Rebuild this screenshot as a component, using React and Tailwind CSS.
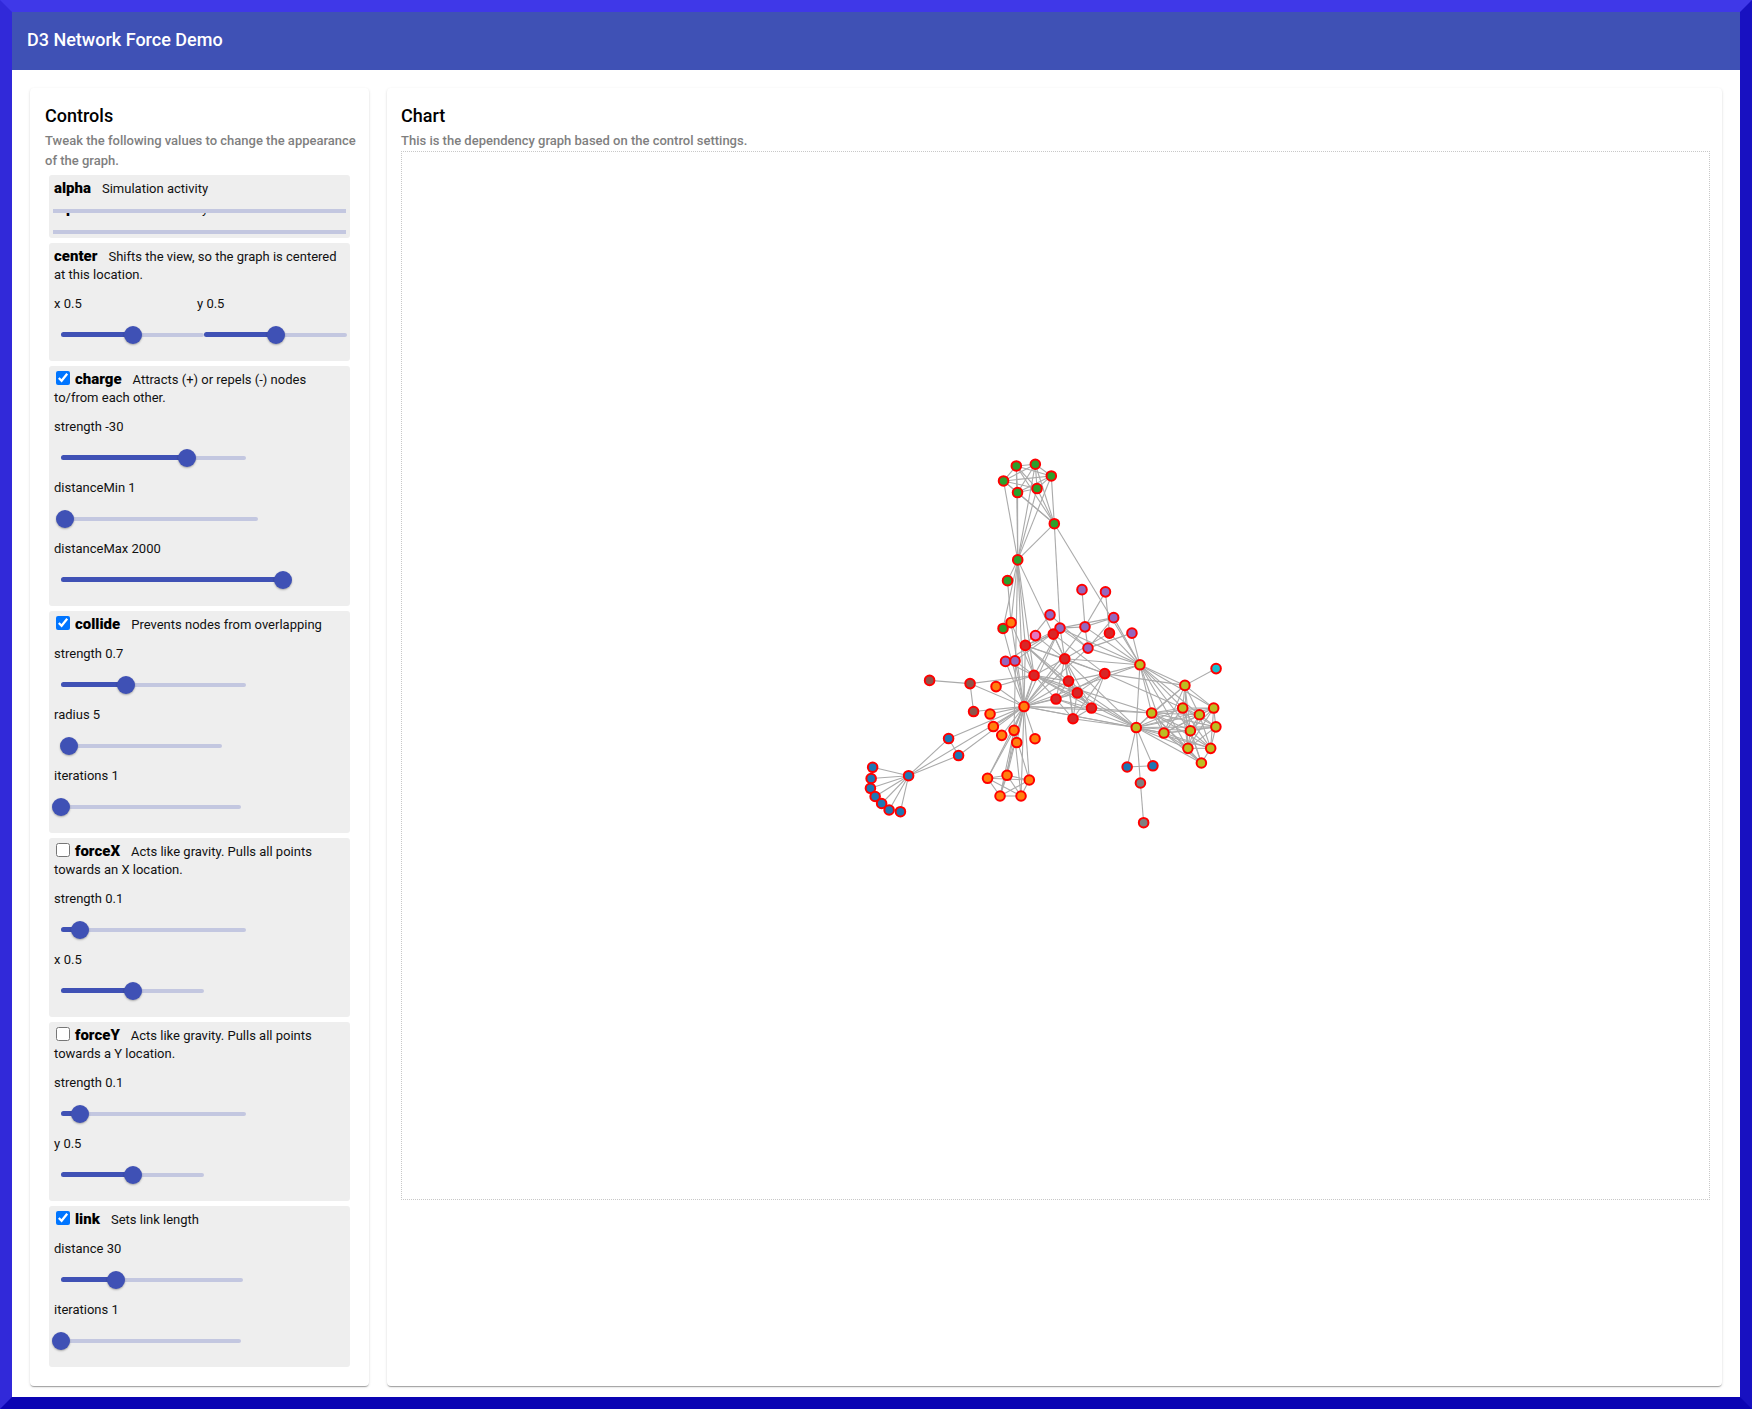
import { useState } from "react";

const PALETTE = {
  blue: "#1f77b4",
  orange: "#ff7f0e",
  green: "#2ca02c",
  red: "#d62728",
  purple: "#9467bd",
  brown: "#8c564b",
  pink: "#e377c2",
  gray: "#7f7f7f",
  olive: "#bcbd22",
  cyan: "#17becf",
};

// id, colour, x, y
const NODES = [
  [0, "blue", 908.5, 775.7],
  [1, "blue", 872.5, 767.3],
  [2, "blue", 948.5, 738.5],
  [3, "blue", 958.5, 755.5],
  [4, "blue", 871, 778.5],
  [5, "blue", 870.3, 788.3],
  [6, "blue", 875, 796.5],
  [7, "blue", 881.5, 803.5],
  [8, "blue", 889, 810],
  [9, "blue", 900.3, 811.7],
  [10, "orange", 990, 714],
  [11, "orange", 1024, 706.5],
  [12, "green", 1003, 628.3],
  [13, "orange", 993.3, 726.5],
  [14, "orange", 1001.7, 735.3],
  [15, "orange", 1016.7, 742.5],
  [16, "green", 1054.3, 523.5],
  [17, "green", 1016.3, 465.7],
  [18, "green", 1035.3, 464],
  [19, "green", 1051.3, 475.7],
  [20, "green", 1003.5, 480.7],
  [21, "green", 1017.5, 492.3],
  [22, "green", 1037, 488.3],
  [23, "green", 1017.7, 559.7],
  [24, "red", 1025.3, 645.3],
  [25, "red", 1064.8, 658.7],
  [26, "purple", 1060, 628],
  [27, "red", 1034, 675.3],
  [28, "brown", 970, 683.5],
  [29, "orange", 1014, 730.3],
  [30, "green", 1007.5, 580.5],
  [31, "orange", 1011, 622.5],
  [32, "orange", 1035, 738.7],
  [33, "orange", 996, 686.5],
  [34, "orange", 987.5, 778.3],
  [35, "orange", 1007, 775.3],
  [36, "orange", 1029.3, 780],
  [37, "orange", 1000, 796],
  [38, "orange", 1021, 796],
  [39, "red", 1109.5, 633],
  [40, "pink", 1035.5, 635.5],
  [41, "red", 1104.8, 673.5],
  [42, "red", 1053.3, 634],
  [43, "purple", 1005.5, 661.3],
  [44, "brown", 973.5, 711.5],
  [45, "brown", 929.5, 680.3],
  [46, "gray", 1143.7, 822.7],
  [47, "gray", 1140.5, 783],
  [48, "olive", 1136.3, 727.5],
  [49, "purple", 1088, 648],
  [50, "purple", 1050, 614.7],
  [51, "purple", 1085, 626.7],
  [52, "purple", 1105.5, 591.7],
  [53, "purple", 1082, 589.5],
  [54, "purple", 1113.7, 617.5],
  [55, "olive", 1140, 664.7],
  [56, "purple", 1132, 633],
  [57, "olive", 1185, 685.3],
  [58, "olive", 1151.7, 713],
  [59, "olive", 1199.5, 714.7],
  [60, "olive", 1216, 726.8],
  [61, "olive", 1213.8, 708],
  [62, "olive", 1182.8, 708],
  [63, "olive", 1190.5, 730.7],
  [64, "olive", 1164, 733],
  [65, "olive", 1188, 748.3],
  [66, "olive", 1210.8, 748.3],
  [67, "cyan", 1216.2, 668.5],
  [68, "red", 1068.5, 681],
  [69, "red", 1077.3, 692.8],
  [70, "red", 1091.5, 708],
  [71, "red", 1056, 699],
  [72, "purple", 1015, 660.8],
  [73, "blue", 1127.2, 767],
  [74, "blue", 1153, 765.8],
  [75, "red", 1073, 718.7],
  [76, "olive", 1201.5, 763],
];

// source id -> target ids
const LINKS = {
  1: [0], 2: [0], 3: [0, 2], 4: [0], 5: [0], 6: [0], 7: [0], 8: [0], 9: [0],
  11: [10, 3, 2, 0],
  12: [11], 13: [11], 14: [11], 15: [11],
  17: [16], 18: [16, 17], 19: [16, 17, 18], 20: [16, 17, 18, 19],
  21: [16, 17, 18, 19, 20], 22: [16, 17, 18, 19, 20, 21],
  23: [16, 17, 18, 19, 20, 21, 22, 12, 11],
  24: [23, 11], 25: [24, 23, 11], 26: [24, 11, 16, 25],
  27: [11, 23, 25, 24, 26], 28: [11, 27], 29: [23, 27, 11], 30: [23],
  31: [30, 11, 23, 27], 32: [11], 33: [11, 27], 34: [11, 29],
  35: [11, 34, 29], 36: [34, 35, 11, 29], 37: [34, 35, 36, 11, 29],
  38: [34, 35, 36, 37, 11, 29], 39: [25], 40: [25], 41: [24, 25],
  42: [41, 25, 24], 43: [11, 26, 27], 44: [28, 11], 45: [28], 47: [46],
  48: [47, 25, 27, 11], 49: [26, 11], 50: [49, 24], 51: [49, 26, 11],
  52: [51, 39], 53: [51], 54: [51, 49, 26],
  55: [51, 49, 39, 54, 26, 11, 16, 25, 41, 48], 56: [49, 55],
  57: [55, 41, 48], 58: [55, 48, 27, 57, 11], 59: [58, 55, 48, 57],
  60: [48, 58, 59], 61: [48, 58, 60, 59, 57, 55],
  62: [55, 58, 59, 48, 57, 41, 61, 60],
  63: [59, 48, 62, 57, 58, 61, 60, 55],
  64: [55, 62, 48, 63, 58, 61, 60, 59, 57, 11],
  65: [63, 64, 48, 62, 58, 61, 60, 59, 57, 55],
  66: [64, 58, 59, 62, 65, 48, 63, 61, 60], 67: [57],
  68: [25, 11, 24, 27, 48, 41], 69: [25, 68, 11, 24, 27, 48, 41],
  70: [25, 69, 68, 11, 24, 27, 41, 58],
  71: [27, 69, 68, 70, 11, 48, 41, 25], 72: [26, 27, 11], 73: [48],
  74: [48, 73], 75: [69, 68, 25, 48, 41, 70, 71],
  76: [64, 65, 66, 63, 62, 48, 58],
};

const BY_ID = new Map(NODES.map((n) => [n[0], n]));

function Graph() {
  return (
    <svg
      viewBox="401.5 151.5 1308 1048"
      className="block h-auto w-full border border-dotted border-[#c8c8c8]"
      role="img"
      aria-label="Force-directed dependency graph"
    >
      <g stroke="#aaaaaa" strokeWidth="1.1">
        {Object.entries(LINKS).flatMap(([s, targets]) =>
          targets.map((t) => {
            const a = BY_ID.get(Number(s));
            const b = BY_ID.get(t);
            return <line key={`${s}-${t}`} x1={a[2]} y1={a[3]} x2={b[2]} y2={b[3]} />;
          })
        )}
      </g>
      <g stroke="#ff0000" strokeWidth="2">
        {NODES.map(([id, color, x, y]) => (
          <circle key={id} cx={x} cy={y} r="4.8" fill={PALETTE[color]} />
        ))}
      </g>
    </svg>
  );
}

function Slider({ id, label, min, max, step, initial, width }) {
  const [value, setValue] = useState(initial);
  const pct = ((value - min) / (max - min)) * 100;
  return (
    <div>
      <label htmlFor={id} className="block pl-px leading-5">
        {label} {value}
      </label>
      <div className={"ml-2 grid h-[41px] items-center " + width}>
        <span className="col-start-1 row-start-1 h-1 rounded-full bg-[#c3c7e0]" />
        <span
          className="col-start-1 row-start-1 h-[5px] rounded-full bg-[#3f51b5]"
          style={{ width: `${pct}%` }}
        />
        <input
          id={id}
          type="range"
          min={min}
          max={max}
          step={step}
          value={value}
          onChange={(e) => setValue(Number(e.target.value))}
          className="z-10 col-start-1 row-start-1 -mx-[9px] h-[18px] cursor-pointer appearance-none bg-transparent [&::-webkit-slider-thumb]:size-[18px] [&::-webkit-slider-thumb]:appearance-none [&::-webkit-slider-thumb]:rounded-full [&::-webkit-slider-thumb]:bg-[#3f51b5] [&::-webkit-slider-thumb]:shadow-[0_1px_2px_rgba(0,0,0,0.3)]"
        />
      </div>
    </div>
  );
}

function Force({ name, description, checked, children }) {
  const id = `force-${name}`;
  const title = "mr-[11px] text-[15px] font-black text-black";
  return (
    <section className="rounded-[3px] bg-[#eeeeee] px-1 pt-1 pb-[6px]">
      <div className="pl-px leading-[18px]">
        {checked === undefined ? (
          <b className={title}>{name}</b>
        ) : (
          <>
            <input
              id={id}
              type="checkbox"
              defaultChecked={checked}
              className="mr-[5px] ml-[2px] size-[14px] align-[-1px]"
            />
            <label htmlFor={id} className={title}>
              {name}
            </label>
          </>
        )}
        {description}
      </div>
      <div className="mt-[10px]">{children}</div>
    </section>
  );
}

function AlphaTitle() {
  return (
    <>
      <b className="mr-[11px] text-[15px] font-black text-black">alpha</b>Simulation activity
    </>
  );
}

function Alpha() {
  return (
    <section className="rounded-[3px] bg-[#eeeeee] px-1 py-1">
      <div className="pl-px leading-[18px]">
        <AlphaTitle />
      </div>
      <div className="mt-[11px] h-1 bg-[#c3c7e0]" role="progressbar" aria-label="alpha" />
      <div className="flex h-1 items-end overflow-hidden pl-px leading-[16px]" aria-hidden="true">
        <div>
          <AlphaTitle />
        </div>
      </div>
      <div className="mt-[13px] h-1 bg-[#c3c7e0]" role="progressbar" aria-label="alpha target" />
    </section>
  );
}

function Panel({ title, subtitle, className, children }) {
  return (
    <section
      className={
        "rounded-[4px] bg-white pt-[13px] pb-[19px] shadow-[0_2px_1px_-1px_rgba(0,0,0,0.2),0_1px_1px_rgba(0,0,0,0.14),0_1px_3px_rgba(0,0,0,0.12)] " +
        className
      }
    >
      <h2 className="mb-px text-lg leading-[29px] font-medium text-black">{title}</h2>
      <p className="text-[13px] leading-5 font-medium text-[#7f7f7f]">{subtitle}</p>
      {children}
    </section>
  );
}

export default function App() {
  return (
    <div className="min-h-screen border-12 border-t-[#3f38e8] border-r-[#1811c1] border-b-[#0b04b3] border-l-[#3129d9] bg-white font-[Roboto,sans-serif] text-[13px] text-[#111111]">
      <header className="flex h-[58px] items-center bg-[#3f51b5] px-[15px] pb-[2px]">
        <h1 className="text-lg font-medium text-white">D3 Network Force Demo</h1>
      </header>
      <main className="flex gap-[18px] px-[18px] pt-[18px] pb-[11px]">
        <Panel
          title="Controls"
          subtitle="Tweak the following values to change the appearance of the graph."
          className="w-[339px] shrink-0 pr-[9px] pl-[15px]"
        >
          <div className="mt-1 mr-[10px] ml-1 flex flex-col gap-[5px]">
            <Alpha />
            <Force name="center" description="Shifts the view, so the graph is centered at this location.">
              <div className="flex">
                <Slider id="center-x" label="x" min={0} max={1} step={0.01} initial={0.5} width="w-[143px]" />
                <div className="-ml-2">
                  <Slider id="center-y" label="y" min={0} max={1} step={0.01} initial={0.5} width="w-[143px]" />
                </div>
              </div>
            </Force>
            <Force name="charge" checked description="Attracts (+) or repels (-) nodes to/from each other.">
              <Slider id="charge-strength" label="strength" min={-200} max={50} step={1} initial={-30} width="w-[185px]" />
              <Slider id="charge-min" label="distanceMin" min={0} max={50} step={1} initial={1} width="w-[197px]" />
              <Slider id="charge-max" label="distanceMax" min={0} max={2000} step={1} initial={2000} width="w-[222px]" />
            </Force>
            <Force name="collide" checked description="Prevents nodes from overlapping">
              <Slider id="collide-strength" label="strength" min={0} max={2} step={0.1} initial={0.7} width="w-[185px]" />
              <Slider id="collide-radius" label="radius" min={0} max={100} step={1} initial={5} width="w-[161px]" />
              <Slider id="collide-iterations" label="iterations" min={1} max={10} step={1} initial={1} width="w-[180px]" />
            </Force>
            <Force name="forceX" checked={false} description="Acts like gravity. Pulls all points towards an X location.">
              <Slider id="x-strength" label="strength" min={0} max={1} step={0.01} initial={0.1} width="w-[185px]" />
              <Slider id="x-x" label="x" min={0} max={1} step={0.01} initial={0.5} width="w-[143px]" />
            </Force>
            <Force name="forceY" checked={false} description="Acts like gravity. Pulls all points towards a Y location.">
              <Slider id="y-strength" label="strength" min={0} max={1} step={0.01} initial={0.1} width="w-[185px]" />
              <Slider id="y-y" label="y" min={0} max={1} step={0.01} initial={0.5} width="w-[143px]" />
            </Force>
            <Force name="link" checked description="Sets link length">
              <Slider id="link-distance" label="distance" min={0} max={100} step={1} initial={30} width="w-[182px]" />
              <Slider id="link-iterations" label="iterations" min={1} max={10} step={1} initial={1} width="w-[180px]" />
            </Force>
          </div>
        </Panel>
        <Panel
          title="Chart"
          subtitle="This is the dependency graph based on the control settings."
          className="min-w-0 flex-1 pr-3 pl-[14px]"
        >
          <Graph />
        </Panel>
      </main>
    </div>
  );
}
